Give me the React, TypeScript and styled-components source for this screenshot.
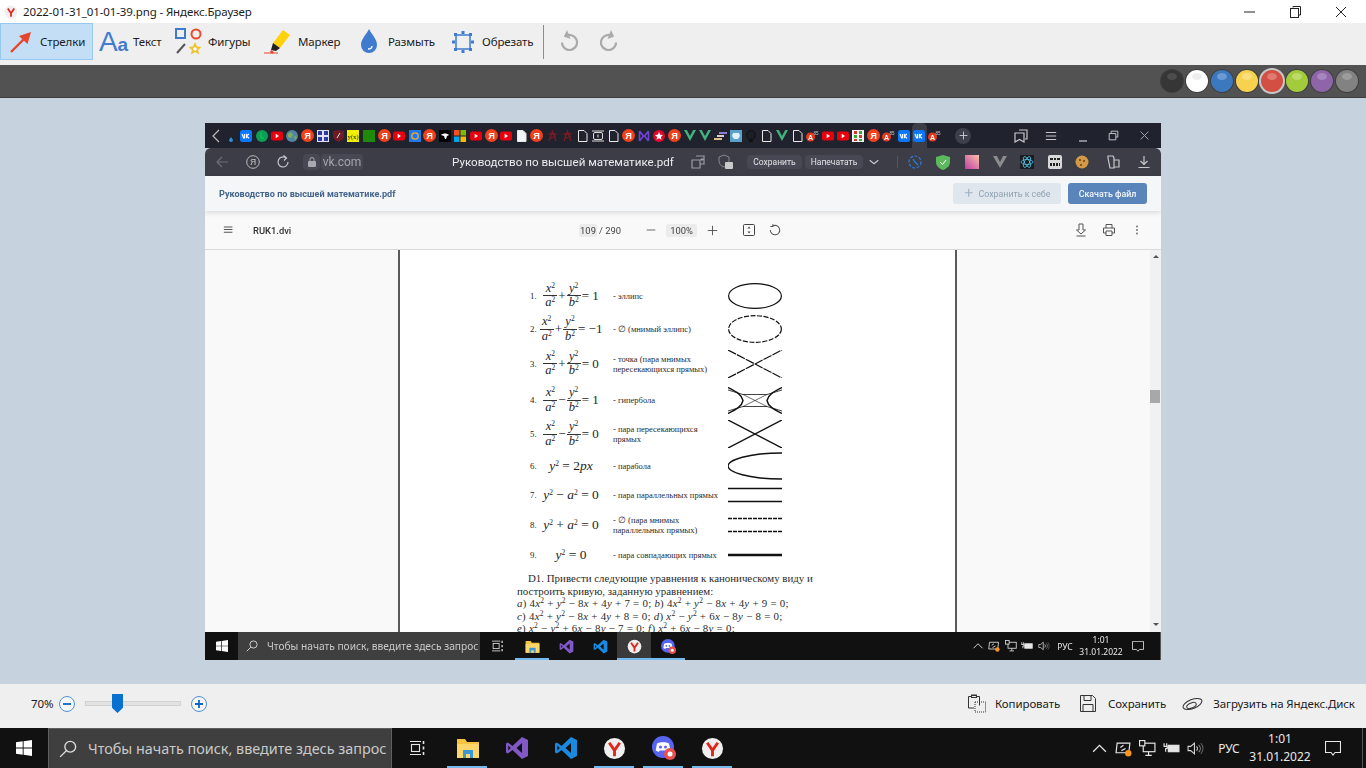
import React from "react";
import styled, { createGlobalStyle } from "styled-components";

const Global = createGlobalStyle`
  html, body { margin: 0; padding: 0; width: 1366px; height: 768px; overflow: hidden; background: #fff; }
  * { box-sizing: border-box; }
  svg { flex: none; }
`;
const UI = `"Noto Sans", "Open Sans", sans-serif`;
const Web = `Roboto, "Noto Sans", sans-serif`;
const Serif = `"Liberation Serif", "Noto Serif", serif`;

const Shell = styled.div`
  width: 1366px; height: 768px; display: flex; flex-direction: column; overflow: hidden;
  font-family: ${UI};
`;
const TitleBar = styled.div`
  height: 23px; background: #fff; display: flex; align-items: center; padding: 0 2px 0 4px;
  font-size: 11.5px; letter-spacing: -0.12px; color: #1c1c1c;
`;
const TitleText = styled.span` margin-left: 5px; white-space: nowrap; `;
const WinButtons = styled.div` margin-left: auto; display: flex; align-items: center; `;
const WinBtn = styled.span` width: 46px; height: 23px; display: flex; align-items: center; justify-content: center; `;

const Toolbar = styled.div` height: 42px; background: #efefef; display: flex; align-items: flex-start; `;
const Tool = styled.div<{ $active?: boolean; $w: number }>`
  height: 37px; display: flex; align-items: center; gap: 6px; padding: 0 6px; flex: none;
  width: ${p => p.$w}px;
  font-size: 11.5px; letter-spacing: -0.12px; color: #1c1c1c; white-space: nowrap;
  background: ${p => (p.$active ? "#c4dff5" : "transparent")};
  border: 1px solid ${p => (p.$active ? "#98c8ee" : "transparent")};
`;
const ToolIcon = styled.span`
  width: 27px; height: 27px; display: flex; align-items: center; justify-content: center; flex: none;
`;
const AaBig = styled.span` color: #3f7bcf; font-size: 28px; line-height: 27px; font-family: "Liberation Sans", sans-serif; `;
const AaSmall = styled.span` color: #3f7bcf; font-size: 19px; line-height: 27px; padding-top: 5px; font-family: "Liberation Sans", sans-serif; font-weight: 700; `;
const ToolSep = styled.span` width: 1px; height: 34px; margin: 2px 0 0 3px; background: #8c8c8c; flex: none; `;
const HistoryIcon = styled.span<{ $ml: number }>` margin: 7px 0 0 ${p => p.$ml}px; display: flex; flex: none; `;

const ColorBar = styled.div`
  height: 33px; background: #525252; border-bottom: 1px solid #3d3d3d; display: flex; align-items: center;
  justify-content: flex-end; padding: 0 8px 1px 0; gap: 3px;
`;
const Swatch = styled.span<{ $c: string; $h: string; $on?: boolean }>`
  width: 22px; height: 22px; border-radius: 50%; position: relative; flex: none;
  background: ${p => p.$c};
  box-shadow: ${p => (p.$on ? "0 0 0 2px #c8c8c8" : "0 0 0 1px #3f3f3f")};
  &::after {
    content: ""; position: absolute; left: 6px; top: 3px; width: 10px; height: 7px; border-radius: 50%;
    background: ${p => p.$h};
  }
`;

const Canvas = styled.div`
  flex: 1; background: #c6d3de; padding: 25px 205px 24px; min-height: 0;
`;
const Shot = styled.div`
  width: 956px; height: 537px; display: flex; flex-direction: column; overflow: hidden; filter: blur(0.35px);
  font-family: ${Web};
`;
const TabStrip = styled.div` height: 25px; background: #20232e; display: flex; align-items: center; flex: none; `;
const Cell = styled.span<{ $active?: boolean }>`
  width: 15.3px; height: 25px; display: flex; align-items: center; justify-content: center; flex: none;
  position: relative;
  background: ${p => (p.$active ? "#3c3d47" : "transparent")};
  border-radius: ${p => (p.$active ? "5px 5px 0 0" : "0")};
`;
const Slot = styled.span<{ $ml?: number; $w?: number }>`
  display: flex; align-items: center; justify-content: center; flex: none; position: relative;
  margin-left: ${p => p.$ml ?? 0}px; width: ${p => p.$w ?? 14}px;
`;
const PlusCircle = styled.span`
  width: 16px; height: 16px; border-radius: 50%; background: #3d3f4a; color: #ddd; display: flex;
  align-items: center; justify-content: center; margin-left: 13px; flex: none;
`;
const AddressBar = styled.div`
  height: 28px; background: #3c3d47; border-radius: 6px 6px 0 0; display: flex; align-items: center;
  padding-left: 10px; color: #ddd; flex: none; font-size: 11px;
`;
const Chip = styled.span<{ $ml?: number; $w: number; $h?: number }>`
  margin-left: ${p => p.$ml ?? 0}px; width: ${p => p.$w}px; height: ${p => p.$h ?? 16}px;
  background: #474853; border-radius: 4px; display: flex; align-items: center; justify-content: center;
  flex: none;
`;
const UrlText = styled.span` font-size: 12px; color: #a4a5ad; `;
const PdfName = styled.span`
  margin-left: 89px; width: 207px; font-size: 11.6px; color: #ececef; white-space: nowrap; flex: none;
`;
const SmallLabel = styled.span` font-size: 8.5px; color: #e2e3e6; white-space: nowrap; `;
const BarSep = styled.span<{ $ml: number }>` width: 1px; height: 12px; background: #555661; margin-left: ${p => p.$ml}px; flex: none; `;
const VkHeader = styled.div`
  height: 35px; background: #f5f6f8; display: flex; align-items: center; justify-content: space-between;
  padding: 0 14px; flex: none; box-shadow: 0 2px 5px rgba(0,0,0,.12); position: relative; z-index: 1;
`;
const VkTitle = styled.span` font-size: 9.1px; font-weight: 700; color: #43658d; white-space: nowrap; `;
const VkButtons = styled.div` display: flex; gap: 7px; `;
const VkButton = styled.span<{ $primary?: boolean; $w: number }>`
  width: ${p => p.$w}px; height: 21px; border-radius: 3px; display: flex; align-items: center; justify-content: center; gap: 4px;
  font-size: 8.8px; font-weight: ${p => (p.$primary ? 500 : 400)};
  background: ${p => (p.$primary ? "#5a85bb" : "#dfe6ed")}; color: ${p => (p.$primary ? "#f2f5f9" : "#90a1b3")};
`;
const PdfBar = styled.div`
  height: 39px; background: #f9f9fa; display: flex; align-items: center; padding-left: 18px; flex: none;
  border-bottom: 1px solid #d9d9d9; font-size: 9.4px; color: #444;
`;
const PdfTitle = styled.span` margin-left: 18px; width: 60px; font-size: 9.4px; color: #333; font-weight: 500; `;
const PdfChip = styled.span<{ $ml: number; $w: number }>`
  margin-left: ${p => p.$ml}px; width: ${p => p.$w}px; height: 13px; background: #ececec; border-radius: 2px;
  display: flex; align-items: center; justify-content: center; font-size: 9.4px; color: #444; flex: none;
`;
const PdfCount = styled.span` margin-left: 2px; width: 21px; flex: none; white-space: nowrap; `;

const Viewport = styled.div` flex: 1; min-height: 0; display: flex; background: #f9f9f9; overflow: hidden; `;
const PageArea = styled.div` flex: 1; padding-left: 193px; overflow: hidden; `;
const Page = styled.div`
  width: 559px; height: 420px; background: #fff; border-left: 2px solid #5a5a5a; border-right: 2px solid #5a5a5a;
  padding-top: 28px; font-family: ${Serif}; color: #1e1e1e;
`;
const Row = styled.div<{ $h: number }>`
  height: ${p => p.$h}px; margin-left: 130px; display: grid; grid-template-columns: 12px 58px 128px 54px;
  align-items: center;
`;
const Num = styled.span` font-size: 8.8px; `;
const Formula = styled.span`
  display: flex; align-items: center; justify-content: center; gap: 1px; font-size: 13px; white-space: nowrap; line-height: 14px;
`;
const Plain = styled.span` font-size: 13.5px; white-space: nowrap; `;
const Frac = styled.span` display: inline-flex; flex-direction: column; align-items: center; font-style: italic; font-size: 12.5px; line-height: 13.5px; `;
const FracLine = styled.span` display: block; height: 1px; width: 14px; background: #333; `;
const Sup = styled.sup` font-size: 7.5px; line-height: 0; font-style: normal; vertical-align: 4.5px; `;
const Desc = styled.span` padding-left: 13px; font-size: 8.5px; line-height: 10px; color: #2b2b2b; `;
const Lines = styled.div` margin: 3px 0 0 117px; width: 300px; font-size: 10.9px; line-height: 12.5px; color: #2b2b2b; `;
const Line = styled.div<{ $indent?: number; $math?: boolean }>`
  white-space: nowrap; padding-left: ${p => p.$indent ?? 0}px; letter-spacing: ${p => (p.$math ? "0.25px" : "0")};
`;
const Scroll = styled.div`
  width: 11px; background: #f1f1f1; display: flex; flex-direction: column; align-items: center; flex: none; position: relative;
`;
const Arrow = styled.span<{ $dir: "up" | "down"; $top: number }>`
  position: absolute; top: ${p => p.$top}px; width: 0; height: 0; border-left: 3px solid transparent; border-right: 3px solid transparent;
  ${p => (p.$dir === "up" ? "border-bottom: 3px solid #555;" : "border-top: 3px solid #555;")}
`;
const Thumb = styled.span` position: absolute; top: 140px; left: 0; width: 10px; height: 13px; background: #a8a8a8; `;

const Bottom = styled.div`
  height: 44px; background: #efefef; display: flex; align-items: center; font-size: 11.5px; letter-spacing: -0.1px; color: #1c1c1c; flex: none;
  padding: 0 0 5px 31px;
`;
const Percent = styled.span` width: 28px; flex: none; `;
const RoundBtn = styled.span`
  width: 16px; height: 16px; border-radius: 50%; border: 1px solid #4d94d8; background: #f6f6f6; position: relative; flex: none;
  display: flex; align-items: center; justify-content: center; color: #0a66c4;
`;
const Track = styled.span`
  width: 96px; height: 5px; margin: 0 10px; background: #e2e2e2; border: 1px solid #d2d2d2; position: relative; flex: none;
`;
const Knob = styled.span`
  position: absolute; left: 26px; top: -8px; width: 11px; height: 19px; background: #0a70d0;
  clip-path: polygon(0 0, 100% 0, 100% 72%, 50% 100%, 0 72%);
`;
const Action = styled.span<{ $ml: number; $gap: number }>`
  display: flex; align-items: center; gap: ${p => p.$gap}px; margin-left: ${p => p.$ml}px; white-space: nowrap; flex: none;
`;

const TaskBar = styled.div<{ $big?: boolean }>`
  height: ${p => (p.$big ? 40 : 28)}px; background: #111; display: flex; align-items: stretch; color: #e8e8e8; flex: none;
  font-family: ${UI};
`;
const StartBtn = styled.span<{ $big?: boolean }>`
  width: ${p => (p.$big ? 48 : 33)}px; display: flex; align-items: center; justify-content: center; flex: none;
`;
const SearchBox = styled.span<{ $big?: boolean }>`
  width: ${p => (p.$big ? 344 : 242)}px; background: #3f3f3f; display: flex; align-items: center; flex: none;
  ${p => (p.$big ? "border: 1px solid #5f5f5f; border-bottom: 0;" : "")}
  padding-left: ${p => (p.$big ? 10 : 8)}px; gap: ${p => (p.$big ? 11 : 9)}px;
  font-size: ${p => (p.$big ? 14.4 : 10.2)}px; color: #c9c9c9; white-space: nowrap; overflow: hidden;
`;
const TaskCell = styled.span<{ $big?: boolean; $on?: boolean; $sel?: boolean }>`
  width: ${p => (p.$big ? 49 : 34)}px; display: flex; align-items: center; justify-content: center; position: relative; flex: none;
  background: ${p => (p.$sel ? "#3a3a3a" : "transparent")};
  &::after {
    content: ""; position: absolute; bottom: 0; height: 2px; background: #76b9ed;
    left: ${p => (p.$big ? 4 : 0)}px; right: ${p => (p.$big ? 5 : 0)}px; display: ${p => (p.$on ? "block" : "none")};
  }
`;
const TaskViewSlot = styled.span<{ $big?: boolean }>`
  width: ${p => (p.$big ? 51 : 35)}px; display: flex; align-items: center; justify-content: center; flex: none;
`;
const Tray = styled.span` margin-left: auto; display: flex; align-items: stretch; flex: none; `;
const TrayIcon = styled.span<{ $big?: boolean }>`
  width: ${p => (p.$big ? 24 : 16.5)}px; display: flex; align-items: center; justify-content: center; flex: none;
`;
const Lang = styled.span<{ $big?: boolean }>`
  width: ${p => (p.$big ? 44 : 26)}px; display: flex; align-items: center; justify-content: center; flex: none;
  font-size: ${p => (p.$big ? 12 : 8.5)}px;
`;
const Clock = styled.span<{ $big?: boolean }>`
  width: ${p => (p.$big ? 58 : 46)}px; display: flex; flex-direction: column; align-items: center; justify-content: center; flex: none;
  font-size: ${p => (p.$big ? 12 : 8.5)}px; line-height: ${p => (p.$big ? 18 : 12.5)}px;
`;
const Note = styled.span<{ $big?: boolean }>`
  width: ${p => (p.$big ? 48 : 28)}px; display: flex; align-items: center; justify-content: center; flex: none;
`;
const DeskEdge = styled.span<{ $big?: boolean }>`
  width: 9px; position: relative; flex: none;
  &::after { content: ""; position: absolute; right: 0; top: 0; bottom: 0; width: ${p => (p.$big ? 3 : 0)}px; border-left: 1px solid #555; }
`;

/* ---------- drawings ---------- */
const YaBrowser = ({ s }: { s: number }) => (
  <svg width={s} height={s} viewBox="0 0 24 24">
    <circle cx="12" cy="12" r="11" fill="#efefef" />
    <path d="M6.5 6 12 14l5.5-8M12 14v6" stroke="#e0261c" strokeWidth="3" fill="none" />
  </svg>
);
const WinLogo = ({ s }: { s: number }) => (
  <svg width={s} height={s} viewBox="0 0 16 16" fill="#fff">
    <path d="M0 2.3 6.7 1.3V7.6H0ZM7.6 1.2 16 0V7.6H7.6ZM0 8.4H6.7V14.7L0 13.7ZM7.6 8.4H16V16L7.6 14.8Z" />
  </svg>
);
const SearchIcon = ({ s }: { s: number }) => (
  <svg width={s} height={s} viewBox="0 0 16 16" fill="none" stroke="#dcdcdc" strokeWidth="1.2">
    <circle cx="10" cy="6" r="4.8" /><path d="M6.5 9.5 1 15" />
  </svg>
);
const TaskView = ({ s }: { s: number }) => (
  <svg width={s} height={s} viewBox="0 0 16 16" fill="none" stroke="#e6e6e6" strokeWidth="1.1">
    <path d="M0 1.5h11M0 14.5h11" /><rect x="1.5" y="4.5" width="8" height="7" /><path d="M13.5 1v3M13.5 6.5v3M13.5 12v3" strokeWidth="1.6" />
  </svg>
);
const Folder = ({ s }: { s: number }) => (
  <svg width={s} height={s} viewBox="0 0 24 24">
    <path d="M1 3h8l2 3h12v16H1Z" fill="#f5c33f" /><path d="M1 8h22v14H1Z" fill="#fbd76b" />
    <path d="M7 14h10v8H7Z" fill="#3a97d6" /><path d="M10 18h4v4h-4Z" fill="#fbd76b" />
  </svg>
);
const VsLogo = ({ s, c }: { s: number; c: string }) => (
  <svg width={s} height={s} viewBox="0 0 24 24">
    <path fillRule="evenodd" fill={c} d="M17 1l6 3v16l-6 3-9.5-9L3 17.5 1 16.5v-9l2-1L7.5 10ZM17 7l-5.5 5 5.5 5ZM3.3 9.5v5L5.7 12Z" />
  </svg>
);
const Discord = ({ s }: { s: number }) => (
  <svg width={s} height={s} viewBox="0 0 24 24">
    <circle cx="11" cy="11" r="11" fill="#5865f2" />
    <path d="M5 7.5c2.5-1.6 9.5-1.6 12 0l1.5 7-3 1.5-1-1.5h-6.800l-1 1.5-3-1.5Z" fill="#fff" />
    <circle cx="8.5" cy="11" r="1.5" fill="#5865f2" /><circle cx="13.5" cy="11" r="1.5" fill="#5865f2" />
    <circle cx="18" cy="18" r="6" fill="#e8504f" /><circle cx="18" cy="18" r="2.5" fill="#fff" />
  </svg>
);
const TrayGlyph = ({ k, s }: { k: string; s: number }) => {
  if (k === "up") return <svg width={s} height={s} viewBox="0 0 16 16" fill="none" stroke="#e6e6e6" strokeWidth="1.2"><path d="M2 11l6-6 6 6" /></svg>;
  if (k === "sync") return <svg width={s} height={s} viewBox="0 0 16 16" fill="none" stroke="#e6e6e6" strokeWidth="1.1"><path d="M2 3h12l-1 9H1Z" /><path d="M5 7l3-2M6 10l4-2" /><circle cx="12.5" cy="12.5" r="3" fill="#f7931e" stroke="none" /></svg>;
  if (k === "net") return <svg width={s} height={s} viewBox="0 0 16 16" fill="none" stroke="#e6e6e6" strokeWidth="1.1"><rect x="4" y="3" width="11" height="8" /><path d="M9 11v3M6 14.5h6" /><rect x="0.5" y="0.5" width="5" height="5" fill="#111" /></svg>;
  if (k === "bat") return <svg width={s} height={s} viewBox="0 0 16 16" fill="none" stroke="#e6e6e6" strokeWidth="1.1"><rect x="5" y="5" width="10" height="6" fill="#e6e6e6" /><path d="M1 3v3M3.5 3v3M0.5 6h3.5v2H2.5v3" /></svg>;
  return <svg width={s} height={s} viewBox="0 0 16 16" fill="none" stroke="#d8d8d8" strokeWidth="1"><path d="M1 6h2.5L7 3v10L3.5 10H1Z" /><path d="M9 6c1 1 1 3 0 4" /><path d="M11 4.5c2 2 2 5 0 7" stroke="#8a8a8a" /><path d="M13 3c2.5 3 2.5 7 0 10" stroke="#5f5f5f" /></svg>;
};

const Ya = () => (
  <svg width="13" height="13" viewBox="0 0 12 12">
    <circle cx="6" cy="6" r="6" fill="#f1401c" />
    <text x="6" y="9" textAnchor="middle" fontSize="8.5" fontWeight="700" fill="#fff" fontFamily="Liberation Sans">Я</text>
  </svg>
);
const Yt = () => (
  <svg width="12" height="10" viewBox="0 0 12 10"><rect width="12" height="9" y=".5" rx="2" fill="#e8000f" /><path d="M4.7 2.7 8 5 4.7 7.3Z" fill="#fff" /></svg>
);
const Vk = () => (
  <svg width="12" height="12" viewBox="0 0 12 12">
    <rect width="12" height="12" rx="2.5" fill="#0b77ff" />
    <path d="M2 4l1.6 4h.8V4M8.8 4 6.5 6l2.6 2.3M6.3 3.8v4.500" stroke="#fff" strokeWidth="1.1" fill="none" />
  </svg>
);
const Doc = ({ c = "#20232e" }: { c?: string }) => (
  <svg width="11" height="12" viewBox="0 0 11 12"><path d="M1.5.5h5.500l3 3V11.500h-8.500Z" fill={c} stroke="#e8e8e8" /></svg>
);
const VueV = () => <svg width="12" height="11" viewBox="0 0 12 11"><path d="M0 0h2.8L6 6l3.2-6H12L6 11Z" fill="#3fb27f" /></svg>;
const AcrA = () => (
  <svg width="13" height="12" viewBox="0 0 13 12">
    <circle cx="4.5" cy="7" r="4.5" fill="#e5391f" /><text x="4.5" y="9.5" textAnchor="middle" fontSize="7" fontWeight="700" fill="#fff" fontFamily="Liberation Sans">A</text>
    <text x="10" y="5" textAnchor="middle" fontSize="4.5" fill="#ccc" fontFamily="Liberation Sans">85</text>
  </svg>
);
const Sq = ({ c, children }: { c: string; children?: React.ReactNode }) => (
  <svg width="12" height="12" viewBox="0 0 12 12"><rect width="12" height="12" fill={c} />{children}</svg>
);
const Fav = ({ k }: { k: string }) => {
  switch (k) {
    case "drop": return <svg width="4" height="5" viewBox="0 0 4 5" style={{ marginTop: 7 }}><path d="M2 0 4 3a2 2 0 0 1-4 0Z" fill="#2d8fe0" /></svg>;
    case "vk": return <Vk />;
    case "green": return <svg width="12" height="12" viewBox="0 0 12 12"><circle cx="6" cy="6" r="6" fill="#0c9d58" /><path d="M5 2.5V8h3" stroke="#0d3" fill="none" /></svg>;
    case "yt": return <Yt />;
    case "earth": return <svg width="12" height="12" viewBox="0 0 12 12"><circle cx="6" cy="6" r="6" fill="#4f86a8" /><path d="M2 4l3-2 2 3-2 3-3-1ZM8 6l3 1-2 3Z" fill="#7fae55" /></svg>;
    case "ya": return <Ya />;
    case "grid": return <Sq c="#dfe2f5"><path d="M1 1h4v4H1ZM7 1h4v4H7ZM1 7h4v4H1ZM7 7h4v4H7Z" fill="#2e3a9c" /></Sq>;
    case "shield": return <svg width="11" height="12" viewBox="0 0 11 12"><path d="M0 1 5.5 0 11 1V6c0 3-3 5-5.500 6C3 11 0 9 0 6Z" fill="#6d1b25" /><path d="M4 8 7 3" stroke="#ddd" /></svg>;
    case "yx": return <Sq c="#f4ee00"><text x="6" y="8.5" textAnchor="middle" fontSize="6.5" fill="#111" fontFamily="Liberation Serif">y(x)</text></Sq>;
    case "sqg": return <Sq c="#1f8a06" />;
    case "at": return <Sq c="#1e78e6"><circle cx="6" cy="6" r="3.2" fill="none" stroke="#f2a93b" strokeWidth="1.3" /></Sq>;
    case "black": return <Sq c="#000"><path d="M2 5c2-2 6-2 8 0L8 6 7 9H6L5 6Z" fill="#fff" /></Sq>;
    case "ms": return <svg width="12" height="12" viewBox="0 0 12 12"><path d="M0 0h5.5v5.500H0Z" fill="#f25022" /><path d="M6.5 0H12v5.500H6.500Z" fill="#7fba00" /><path d="M0 6.5h5.500V12H0Z" fill="#00a4ef" /><path d="M6.5 6.500H12V12H6.500Z" fill="#ffb900" /></svg>;
    case "docw": return <Doc c="#f4f4f4" />;
    case "doc": return <Doc />;
    case "x": return <svg width="11" height="12" viewBox="0 0 11 12" fill="none" stroke="#7c1a22" strokeWidth="1.3"><path d="M2 11 5.5 1 9 11M1.500 4h8M2 9l7-3" /></svg>;
    case "rect": return <svg width="12" height="12" viewBox="0 0 12 12" fill="none" stroke="#ddd"><rect x="1.5" y="2.5" width="9" height="7" rx="1.5" /><path d="M6 4.5v3M0 1h12M0 11h12" /></svg>;
    case "h": return <svg width="12" height="12" viewBox="0 0 12 12" fill="none" stroke="#6f42d8" strokeWidth="1.6"><path d="M1.5 1l4 5-4 5M10.500 1l-4 5 4 5M1.500 1v10M10.500 1v10" /></svg>;
    case "star": return <svg width="12" height="12" viewBox="0 0 12 12"><circle cx="6" cy="6" r="6" fill="#e2062c" /><path d="M6 2l1.200 2.700 2.800.3-2.100 1.900.6 2.800L6 8.300 3.500 9.700l.6-2.800L2 5l2.800-.3Z" fill="#fff" /></svg>;
    case "v": return <VueV />;
    case "stripe": return <svg width="13" height="10" viewBox="0 0 13 10"><path d="M5 1h8v2H5Z" fill="#8a7fd1" /><path d="M3 4h7v2H3Z" fill="#dcc" /><path d="M0 7h8v2H0Z" fill="#d9c089" /></svg>;
    case "tile": return <Sq c="#5aa0c8"><path d="M3 3h6l1 3-2 3H4L2 6Z" fill="#dff2fb" /></Sq>;
    case "dark": return <svg width="10" height="12" viewBox="0 0 10 12"><circle cx="5" cy="5" r="4.5" fill="#1c1e26" stroke="#111" /><path d="M3 10h4v2H3Z" fill="#111" /></svg>;
    case "a": return <AcrA />;
    case "tile2": return <Sq c="#f4f4f4"><path d="M2 1h3v3H2Z" fill="#d33" /><path d="M7 1h3v3H7Z" fill="#3a3" /><path d="M2 5h3v3H2Z" fill="#3a3" /><path d="M7 5h3v3H7Z" fill="#d33" /><path d="M2 9h3v2H2Z" fill="#d33" /><path d="M7 9h3v2H7Z" fill="#3a3" /></Sq>;
    default: return null;
  }
};
const TABS = ["drop","vk","green","yt","earth","ya","grid","shield","yx","sqg","ya","yt","at","ya","black","ms","yt","ya","yt","docw","ya","x","x","doc","rect","doc","ya","h","star","ya","v","v","stripe","tile","dark","doc","v","doc","a","yt","yt","tile2","ya","a","vk","vk","a"];

const Line2 = ({ d, w = 1.2, c = "#c8c8cc", s = 14 }: { d: string; w?: number; c?: string; s?: number }) => (
  <svg width={s} height={s} viewBox="0 0 14 14" fill="none" stroke={c} strokeWidth={w}><path d={d} /></svg>
);

const Win = ({ big }: { big?: boolean }) => {
  const s = big ? 24 : 15;
  const ty = big ? 17 : 12;
  return (
    <TaskBar $big={big}>
      <StartBtn $big={big}><WinLogo s={big ? 16 : 12} /></StartBtn>
      <SearchBox $big={big}><SearchIcon s={big ? 18 : 12} />Чтобы начать поиск, введите здесь запрос</SearchBox>
      <TaskViewSlot $big={big}><TaskView s={big ? 16 : 12} /></TaskViewSlot>
      <TaskCell $big={big} $on><Folder s={s} /></TaskCell>
      <TaskCell $big={big}><VsLogo s={s} c="#8159c7" /></TaskCell>
      <TaskCell $big={big}><VsLogo s={s} c="#1a8ae0" /></TaskCell>
      <TaskCell $big={big} $on $sel={!big}><YaBrowser s={big ? 23 : 15} /></TaskCell>
      <TaskCell $big={big} $on><Discord s={s} /></TaskCell>
      {big && <TaskCell $big $on><YaBrowser s={23} /></TaskCell>}
      <Tray>
        {["up", "sync", "net", "bat", "vol"].map(k => <TrayIcon $big={big} key={k}><TrayGlyph k={k} s={ty} /></TrayIcon>)}
        <Lang $big={big}>РУС</Lang>
        <Clock $big={big}><span>1:01</span><span>31.01.2022</span></Clock>
        <Note $big={big}>
          <svg width={big ? 16 : 12} height={big ? 15 : 11} viewBox="0 0 16 15" fill="none" stroke="#e8e8e8" strokeWidth="1.1"><path d="M.5.5h15v11H10l-2 2.500-2-2.500H.5Z" /></svg>
        </Note>
        <DeskEdge $big={big} />
      </Tray>
    </TaskBar>
  );
};

const sup2 = <Sup>2</Sup>;
const Fr = ({ t, b }: { t: string; b: string }) => (
  <Frac><span>{t}{sup2}</span><FracLine /><span>{b}{sup2}</span></Frac>
);
const I = styled.i``;

const FIG = (h: number, body: React.ReactNode) => (
  <svg width="54" height={h} viewBox={`0 0 54 ${h}`} fill="none" stroke="#111" strokeWidth="1.2">{body}</svg>
);
const ROWS: { h: number; n: string; f: React.ReactNode; d: React.ReactNode; g: React.ReactNode }[] = [
  { h: 35, n: "1.", f: <><Fr t="x" b="a" />+<Fr t="y" b="b" /><span>= 1</span></>, d: "- эллипс", g: FIG(26, <ellipse cx="27" cy="13" rx="26.4" ry="12.3" />) },
  { h: 32, n: "2.", f: <><Fr t="x" b="a" />+<Fr t="y" b="b" /><span>= −1</span></>, d: "- ∅ (мнимый эллипс)", g: FIG(28, <ellipse cx="27" cy="14" rx="26.4" ry="13.3" strokeDasharray="5 1.5" />) },
  { h: 37, n: "3.", f: <><Fr t="x" b="a" />+<Fr t="y" b="b" /><span>= 0</span></>, d: <>- точка (пара мнимых<br />пересекающихся прямых)</>, g: FIG(28, <path d="M0 0 54 28M0 28 54 0" strokeDasharray="9 1" />) },
  { h: 36, n: "4.", f: <><Fr t="x" b="a" />−<Fr t="y" b="b" /><span>= 1</span></>, d: "- гипербола", g: FIG(27, <><path d="M0 .5C9 5 14 8 15 13.500C14 19 9 22 0 26.500M54 .5C45 5 40 8 39 13.500C40 19 45 22 54 26.500" strokeWidth="1.4" /><path d="M0 3 15 7.500H39L54 3M0 24 15 19.500H39L54 24" strokeWidth=".8" /><path d="M15 7.500 39 19.500M15 19.500 39 7.500" strokeWidth=".6" /></>) },
  { h: 32, n: "5.", f: <><Fr t="x" b="a" />−<Fr t="y" b="b" /><span>= 0</span></>, d: <>- пара пересекающихся<br />прямых</>, g: FIG(28, <path d="M0 0 54 28M0 28 54 0" strokeWidth="1.4" />) },
  { h: 31, n: "6.", f: <Plain><I>y</I>{sup2} = 2<I>px</I></Plain>, d: "- парабола", g: FIG(28, <path d="M54 1C20 1 0 8 0 14s20 13 54 13" strokeWidth="1.3" />) },
  { h: 28, n: "7.", f: <Plain><I>y</I>{sup2} − <I>a</I>{sup2} = 0</Plain>, d: "- пара параллельных прямых", g: FIG(16, <path d="M0 1.500H54M0 14.500H54" strokeWidth="1.3" />) },
  { h: 32, n: "8.", f: <Plain><I>y</I>{sup2} + <I>a</I>{sup2} = 0</Plain>, d: <>- ∅ (пара мнимых<br />параллельных прямых)</>, g: FIG(16, <path d="M0 1.500H54M0 14.500H54" strokeDasharray="4 1" strokeWidth="1.3" />) },
  { h: 28, n: "9.", f: <Plain><I>y</I>{sup2} = 0</Plain>, d: "- пара совпадающих прямых", g: FIG(4, <path d="M0 2H54" strokeWidth="2.6" />) },
];
const X = () => <I>x</I>;
const Y = () => <I>y</I>;

export default function App() {
  return (
    <Shell>
      <Global />
      <TitleBar>
        <YaBrowser s={14} />
        <TitleText>2022-01-31_01-01-39.png - Яндекс.Браузер</TitleText>
        <WinButtons>
          <WinBtn><svg width="11" height="2"><path d="M0 1h11" stroke="#222" /></svg></WinBtn>
          <WinBtn><svg width="11" height="12" viewBox="0 0 11 12" fill="none" stroke="#222"><path d="M3 1.500V.5h7.500V9H9" /><rect x=".5" y="2.500" width="8" height="9" /></svg></WinBtn>
          <WinBtn><svg width="12" height="12" fill="none" stroke="#222"><path d="M1 1l10 10M11 1 1 11" /></svg></WinBtn>
        </WinButtons>
      </TitleBar>
      <Toolbar>
        <Tool $active $w={93}>
          <ToolIcon>
            <svg width="24" height="24" viewBox="0 0 24 24"><path d="M2 22 16 8" stroke="#e8452c" strokeWidth="2.4" /><path d="M22 2 18.5 14 10 6Z" fill="#e8452c" /></svg>
          </ToolIcon>
          Стрелки
        </Tool>
        <Tool $w={75}>
          <ToolIcon><AaBig>A</AaBig><AaSmall>a</AaSmall></ToolIcon>
          Текст
        </Tool>
        <Tool $w={90}>
          <ToolIcon>
            <svg width="27" height="27" viewBox="0 0 27 27" fill="none">
              <rect x="1" y="1" width="9" height="9" stroke="#3f7bcf" strokeWidth="2" />
              <circle cx="21" cy="6" r="4.5" stroke="#ea4b30" strokeWidth="2" />
              <path d="M2 25 10 16" stroke="#555" strokeWidth="2" />
              <path d="M20 14l2 4.500 4.500.4-3.400 3 1 4.500-4.100-2.400-4.100 2.400 1-4.500-3.400-3 4.500-.4Z" fill="#f2c12e" />
              <circle cx="20" cy="21" r="1.8" fill="#fff" />
            </svg>
          </ToolIcon>
          Фигуры
        </Tool>
        <Tool $w={90}>
          <ToolIcon>
            <svg width="29" height="27" viewBox="0 0 29 27">
              <path d="M19 2l7 5-10 13-7-5Z" fill="#fdd20a" /><path d="M9 15l7 5-4 3-5-1Z" fill="#222" />
              <path d="M0 25H14" stroke="#ee7b6c" strokeWidth="1.5" /><path d="M7 22l3 2-2 2-2-2Z" fill="#e8452c" />
            </svg>
          </ToolIcon>
          Маркер
        </Tool>
        <Tool $w={94}>
          <ToolIcon>
            <svg width="20" height="27" viewBox="0 0 20 27"><path d="M10 1C13 7 18 11 18 17a8 8 0 0 1-16 0C2 11 7 7 10 1Z" fill="#3f7bcf" /><path d="M9 21c3 0 4-1 4-3" stroke="#fff" strokeWidth="1.4" fill="none" /></svg>
          </ToolIcon>
          Размыть
        </Tool>
        <Tool $w={98}>
          <ToolIcon>
            <svg width="24" height="24" viewBox="0 0 24 24" fill="#3f7bcf"><path d="M5 5h14v14H5Z" fill="none" stroke="#3f7bcf" strokeWidth="1.5" /><path d="M3 3h3v3H3ZM10.500 1h3v3h-3ZM18 3h3v3h-3ZM3 18h3v3H3ZM18 18h3v3h-3ZM10.500 20h3v3h-3ZM1 10.500h3v3H1ZM20 10.500h3v3h-3Z" /></svg>
          </ToolIcon>
          Обрезать
        </Tool>
        <ToolSep />
        <HistoryIcon $ml={16}>
          <svg width="18" height="22" viewBox="0 0 18 22" fill="none" stroke="#aaa" strokeWidth="2.2"><path d="M5 6.500a7.500 7.500 0 1 1-3 6" /><path d="M7 0 4 6.500l6.500 2.500" fill="#aaa" stroke="none" /></svg>
        </HistoryIcon>
        <HistoryIcon $ml={22}>
          <svg width="18" height="22" viewBox="0 0 18 22" fill="none" stroke="#aaa" strokeWidth="2.2"><path d="M13 6.500a7.500 7.500 0 1 0 3 6" /><path d="M11 0l3 6.500-6.500 2.500" fill="#aaa" stroke="none" /></svg>
        </HistoryIcon>
      </Toolbar>
      <ColorBar>
        <Swatch $c="#363636" $h="#4d4d4d" />
        <Swatch $c="#fff" $h="#eee" />
        <Swatch $c="#3c78bd" $h="#6a9bd2" />
        <Swatch $c="#f7d24e" $h="#fadf7d" />
        <Swatch $c="#d34f43" $h="#e07a70" $on />
        <Swatch $c="#a3cb3c" $h="#bcdb68" />
        <Swatch $c="#8e65a8" $h="#a886bd" />
        <Swatch $c="#828282" $h="#9c9c9c" />
      </ColorBar>
      <Canvas>
        <Shot>
          <TabStrip>
            <Slot $ml={5} $w={13}><Line2 d="M9 1 3 7l6 6" c="#bbb" /></Slot>
            <Slot $w={0.4} />
            {TABS.map((k, i) => <Cell key={i} $active={i === 45}><Fav k={k} /></Cell>)}
            <PlusCircle><Line2 d="M7 2v10M2 7h10" s={11} /></PlusCircle>
            <Slot $ml={43}><Line2 d="M5 1h8v9h-2M1 4h9v9l-4.500-2.500L1 13Z" /></Slot>
            <Slot $ml={16}><Line2 d="M1 3h12M1 7h12M1 11h12" s={12} /></Slot>
            <Slot $ml={18}><Line2 d="M3 12h8" /></Slot>
            <Slot $ml={16}><Line2 d="M4 4V1.500h8.500V9H10M1.500 4.500H10V12.500H1.500Z" s={11} /></Slot>
            <Slot $ml={17}><Line2 d="M2 2l10 10M12 2 2 12" s={11} c="#a8a8ac" /></Slot>
          </TabStrip>
          <AddressBar>
            <Slot><Line2 d="M13 7H2M7 2 2 7l5 5" c="#6d6e78" /></Slot>
            <Slot $ml={17}>
              <svg width="14" height="14" viewBox="0 0 14 14"><circle cx="7" cy="7" r="6.3" fill="none" stroke="#bbb" /><text x="7" y="10" textAnchor="middle" fontSize="8.5" fill="#ccc" fontFamily="Liberation Sans">Я</text></svg>
            </Slot>
            <Slot $ml={16}><Line2 d="M12 7a5 5 0 1 1-2-4M7.500 .5 10.500 3 8 5.500" /></Slot>
            <Chip $ml={13} $w={17}>
              <svg width="8" height="10" viewBox="0 0 8 10"><rect y="4" width="8" height="6" rx="1" fill="#a9aab1" /><path d="M2 4V2.500a2 2 0 0 1 4 0V4" fill="none" stroke="#a9aab1" /></svg>
            </Chip>
            <Chip $ml={1} $w={42}><UrlText>vk.com</UrlText></Chip>
            <PdfName>Руководство по высшей математике.pdf</PdfName>
            <Slot $ml={32}><Line2 d="M5 1h8v8H9M1 5h8v8H1ZM11 3v3M9.500 4.500h3" c="#9a9ba3" /></Slot>
            <Slot $ml={14}><svg width="16" height="16" viewBox="0 0 16 16"><path d="M1 3 6 1l5 2v4c0 3-2 5-5 6-3-1-5-3-5-6Z" fill="none" stroke="#888" /><rect x="7" y="8" width="8" height="7" rx="1" fill="#c9c9c9" /></svg></Slot>
            <Chip $ml={14} $w={55} $h={14}><SmallLabel>Сохранить</SmallLabel></Chip>
            <Chip $ml={3} $w={58} $h={14}><SmallLabel>Напечатать</SmallLabel></Chip>
            <Slot $ml={5} $w={12}><Line2 d="M2 5l5 4 5-4" w={1.5} s={12} /></Slot>
            <BarSep $ml={17} />
            <Slot $ml={10}><svg width="14" height="14" viewBox="0 0 14 14" fill="none" stroke="#2f7ad8" strokeWidth="1.2"><circle cx="7" cy="7" r="6" strokeDasharray="3 1.5" /><path d="M5 4l2 3 3 3" /></svg></Slot>
            <Slot $ml={14}><svg width="14" height="15" viewBox="0 0 14 15"><path d="M7 0l7 2v5c0 4-3 6.500-7 8-4-1.500-7-4-7-8V2Z" fill="#5cb85c" /><path d="M4 7l2.500 2.500L10 5" stroke="#fff" fill="none" /></svg></Slot>
            <Slot $ml={15}><svg width="14" height="14"><defs><linearGradient id="pk" x1="0" y1="1" x2="1" y2="0"><stop offset="0" stopColor="#c13fa6" /><stop offset="1" stopColor="#fbc0a6" /></linearGradient></defs><rect width="14" height="14" fill="url(#pk)" /></svg></Slot>
            <Slot $ml={14}><svg width="14" height="12" viewBox="0 0 14 12"><path d="M0 0h4l3 6 3-6h4L7 12Z" fill="#8c8c8c" /></svg></Slot>
            <Slot $ml={13}><svg width="14" height="14" viewBox="0 0 14 14" fill="none" stroke="#4fc3e8" strokeWidth=".8"><rect width="14" height="14" fill="#1c1c20" stroke="none" /><ellipse cx="7" cy="7" rx="6" ry="2.5" /><ellipse cx="7" cy="7" rx="6" ry="2.5" transform="rotate(60 7 7)" /><ellipse cx="7" cy="7" rx="6" ry="2.5" transform="rotate(120 7 7)" /></svg></Slot>
            <Slot $ml={14}><svg width="14" height="14" viewBox="0 0 14 14"><rect width="14" height="14" rx="2" fill="#d8d8d8" /><path d="M2 3h3v2H2ZM6 3h2v2H6ZM9 3h3v2H9ZM2 8h2v3H2ZM5 8h2v3H5ZM8 8h2v3H8ZM11 8h1v3h-1Z" fill="#222" /></svg></Slot>
            <Slot $ml={13}><svg width="14" height="14" viewBox="0 0 14 14"><circle cx="7" cy="7" r="6.5" fill="#d29a46" /><circle cx="5" cy="5" r="1" fill="#6a3f10" /><circle cx="9" cy="6" r="1" fill="#6a3f10" /><circle cx="6" cy="10" r="1" fill="#6a3f10" /></svg></Slot>
            <Slot $ml={17}><Line2 d="M2 1h5l1 2v10H4L2 3ZM8 5h5v7H8" /></Slot>
            <Slot $ml={17}><Line2 d="M7 1v8M3.500 6 7 9.500 10.500 6M1.500 12.500h11" /></Slot>
          </AddressBar>
          <VkHeader>
            <VkTitle>Руководство по высшей математике.pdf</VkTitle>
            <VkButtons>
              <VkButton $w={108}><Line2 d="M6 1v10M1 6h10" s={11} c="#9fb0c1" w={1.5} />Сохранить к себе</VkButton>
              <VkButton $primary $w={79}>Скачать файл</VkButton>
            </VkButtons>
          </VkHeader>
          <PdfBar>
            <Slot $w={12}><Line2 d="M1 3.500h10M1 6.500h10M1 9.500h10" c="#555" s={12} /></Slot>
            <PdfTitle>RUK1.dvi</PdfTitle>
            <PdfChip $ml={266} $w={18}>109</PdfChip>
            <PdfCount>/ 290</PdfCount>
            <Slot $ml={26} $w={10}><Line2 d="M1 7h12" c="#555" s={10} /></Slot>
            <PdfChip $ml={10} $w={31}>100%</PdfChip>
            <Slot $ml={10} $w={10}><Line2 d="M1 7h12M7 1v12" c="#555" s={11} /></Slot>
            <Slot $ml={26} $w={12}><svg width="12" height="12" viewBox="0 0 12 12" fill="none" stroke="#444"><rect x=".5" y=".5" width="11" height="11" rx="1" /><path d="M6 2.500 4.500 4.500h3ZM6 9.500 4.500 7.500h3Z" fill="#444" stroke="none" /></svg></Slot>
            <Slot $ml={14} $w={12}><svg width="12" height="12" viewBox="0 0 14 14" fill="none" stroke="#555" strokeWidth="1.2"><path d="M4 2.500A5.500 5.500 0 1 1 1.500 7M4.500 .2V3H1.500" /></svg></Slot>
            <Slot $ml={294} $w={12}><svg width="12" height="14" viewBox="0 0 12 14" fill="none" stroke="#555"><path d="M4 1h4v6h2.500L6 11 1.500 7H4ZM1.500 13h9" /></svg></Slot>
            <Slot $ml={16} $w={12}><svg width="12" height="12" viewBox="0 0 12 12" fill="none" stroke="#555"><path d="M3 4V.5h6V4M3 9H.5V4h11v5H9M3 7h6v4.500H3Z" /></svg></Slot>
            <Slot $ml={20} $w={4}><svg width="4" height="10" fill="#666"><circle cx="2" cy="1.5" r=".9" /><circle cx="2" cy="5" r=".9" /><circle cx="2" cy="8.5" r=".9" /></svg></Slot>
          </PdfBar>
          <Viewport>
            <PageArea>
              <Page>
                {ROWS.map(r => (
                  <Row key={r.n} $h={r.h}>
                    <Num>{r.n}</Num>
                    <Formula>{r.f}</Formula>
                    <Desc>{r.d}</Desc>
                    {r.g}
                  </Row>
                ))}
                <Lines>
                  <Line $indent={11}>D1. Привести следующие уравнения к каноническому виду и</Line>
                  <Line>построить кривую, заданную уравнением:</Line>
                  <Line $math><I>a</I>) 4<X />{sup2} + <Y />{sup2} − 8<X /> + 4<Y /> + 7 = 0; <I>b</I>) 4<X />{sup2} + <Y />{sup2} − 8<X /> + 4<Y /> + 9 = 0;</Line>
                  <Line $math><I>c</I>) 4<X />{sup2} + <Y />{sup2} − 8<X /> + 4<Y /> + 8 = 0; <I>d</I>) <X />{sup2} − <Y />{sup2} + 6<X /> − 8<Y /> − 8 = 0;</Line>
                  <Line $math><I>e</I>) <X />{sup2} − <Y />{sup2} + 6<X /> − 8<Y /> − 7 = 0; <I>f</I>) <X />{sup2} + 6<X /> − 8<Y /> = 0;</Line>
                </Lines>
              </Page>
            </PageArea>
            <Scroll>
              <Arrow $dir="up" $top={5} />
              <Thumb />
              <Arrow $dir="down" $top={373} />
            </Scroll>
          </Viewport>
          <Win />
        </Shot>
      </Canvas>
      <Bottom>
        <Percent>70%</Percent>
        <RoundBtn><svg width="8" height="8"><path d="M0 4h8" stroke="#0a66c4" strokeWidth="1.8" /></svg></RoundBtn>
        <Track><Knob /></Track>
        <RoundBtn><svg width="8" height="8"><path d="M0 4h8M4 0v8" stroke="#0a66c4" strokeWidth="1.8" /></svg></RoundBtn>
        <Action $ml={760} $gap={9}>
          <svg width="19" height="19" viewBox="0 0 19 19" fill="none" stroke="#333"><path d="M1.500 2.500h3v-1h5v1h3v9M1.500 2.500V14H7" /><rect x="4.500" y="1" width="5" height="2.500" /><path d="M8 8h10.500v10H8Z" strokeDasharray="1 1" /></svg>
          Копировать
        </Action>
        <Action $ml={20} $gap={12}>
          <svg width="16" height="17" viewBox="0 0 16 17" fill="none" stroke="#333"><path d="M.5.5h12l3 3v13H.5ZM4 .5v5h7v-5M3 16.500v-7h10v7" /></svg>
          Сохранить
        </Action>
        <Action $ml={16} $gap={10}>
          <svg width="21" height="14" viewBox="0 0 21 14" fill="none" stroke="#333"><ellipse cx="10.500" cy="7" rx="10" ry="4.500" transform="rotate(-22 10.500 7)" /><ellipse cx="9.500" cy="8.500" rx="5" ry="2.500" transform="rotate(-22 9.500 8.500)" /></svg>
          Загрузить на Яндекс.Диск
        </Action>
      </Bottom>
      <Win big />
    </Shell>
  );
}
